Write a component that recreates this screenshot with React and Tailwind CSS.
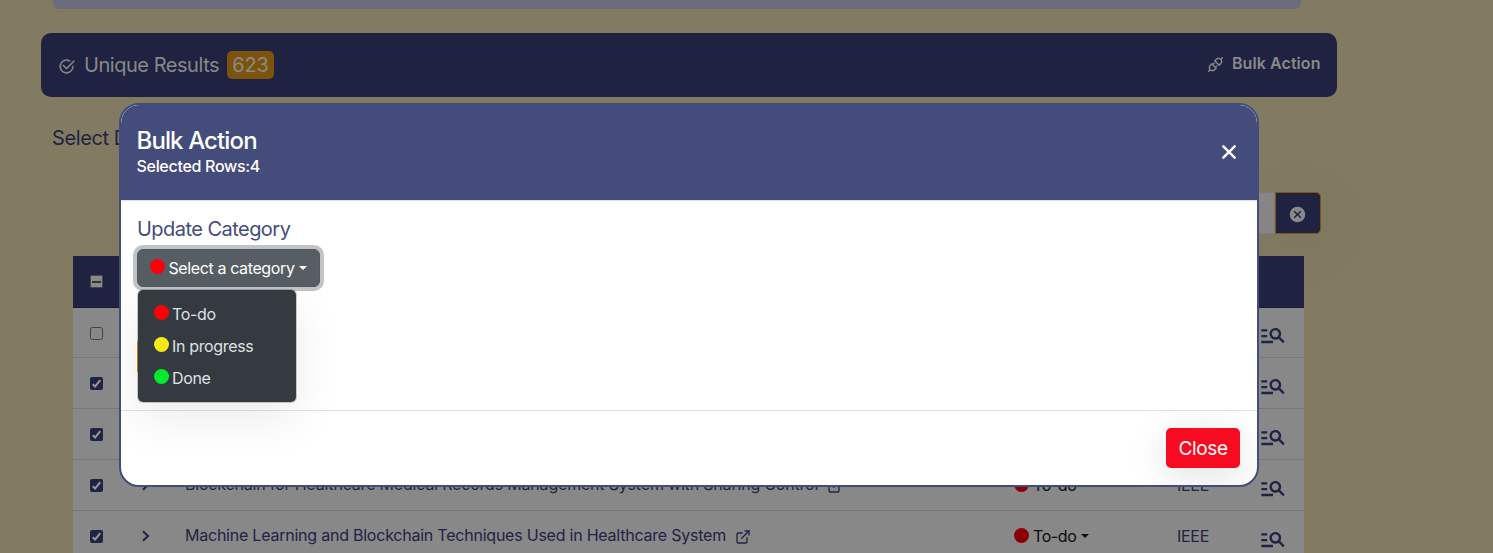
import React from "react";
import { BsCheck2Circle } from "react-icons/bs";
import { AiOutlineApi } from "react-icons/ai";
import { MdManageSearch } from "react-icons/md";
import { FiExternalLink } from "react-icons/fi";
import { IoMdCloseCircle } from "react-icons/io";

function Dot({ className }) {
  return <span className={`block size-[15px] shrink-0 rounded-full ${className}`} />;
}

function Caret({ className }) {
  return <span className={`block border-x-4 border-t-4 border-x-transparent ${className}`} />;
}

function Checkbox({ state }) {
  if (state === "checked")
    return (
      <span className="flex size-[13px] items-center justify-center rounded-[2px] bg-[#1f2344]">
        <svg viewBox="0 0 13 13" className="size-[13px]" fill="none" stroke="#979797" strokeWidth="2">
          <path d="M2.7 7.2 5.1 9.5 10.3 3.2" />
        </svg>
      </span>
    );
  if (state === "mixed")
    return (
      <span className="flex size-[13px] items-center justify-center rounded-[1px] border border-[#464646] bg-[#898989]">
        <span className="block h-[2px] w-[9px] bg-[#333]" />
      </span>
    );
  return <span className="block size-[13px] rounded-[2.5px] border border-[#414141]" />;
}

const rows = [
  { h: "h-[50px]", state: "empty" },
  { h: "h-[51px]", state: "checked" },
  { h: "h-[51px]", state: "checked" },
  {
    h: "h-[51px]",
    state: "checked",
    title: "Blockchain for Healthcare Medical Records Management System with Sharing Control",
    width: "w-[633px]",
    track: "tracking-[-0.19px]",
  },
  {
    h: "h-[51px]",
    state: "checked",
    title: "Machine Learning and Blockchain Techniques Used in Healthcare System",
    width: "w-[541px]",
    track: "tracking-[-0.23px]",
  },
];

function Row({ row }) {
  return (
    <div className={`flex shrink-0 items-center border-b border-[#777] bg-[#888] text-base text-[#1f2344] ${row.h}`}>
      <div className="flex w-[64px] shrink-0 pl-[17px] pt-px">
        <Checkbox state={row.state} />
      </div>
      <div className="w-[48px] shrink-0 pl-[5px]">
        {row.title && (
          <svg viewBox="0 0 8 12" className="h-3 w-2" fill="none" stroke="currentColor" strokeWidth="2">
            <path d="M1 1.2 6 6 1 10.8" />
          </svg>
        )}
      </div>
      <div className="flex w-[829px] shrink-0 items-center gap-[9px] whitespace-nowrap">
        {row.title && (
          <>
            <span className={`mb-[2px] ${row.width} ${row.track}`}>{row.title}</span>
            <FiExternalLink className="mt-[2px] size-4" />
          </>
        )}
      </div>
      <div className="flex w-[163px] shrink-0 items-center text-[#0c0c0c]">
        {row.title && (
          <>
            <Dot className="mb-[2px] bg-[#8b0008]" />
            <span className="ml-1 mr-px tracking-[-0.4px]">To-do</span>
            <Caret className="ml-1 border-t-[#0c0c0c]" />
          </>
        )}
      </div>
      <div className="w-[82px] shrink-0 tracking-[-0.3px]">{row.title && "IEEE"}</div>
      <MdManageSearch className="mt-[5px] size-7" />
    </div>
  );
}

function Page() {
  return (
    <div className="flex h-full w-full flex-col">
      <div className="ml-[53px] h-[9px] w-[1248px] shrink-0 rounded-b-md bg-[#6a6d7b]" />
      <div className="ml-[41px] mt-6 flex h-16 w-[1296px] shrink-0 items-center justify-between rounded-[10px] bg-[#1f2240] px-[17px] text-[#898989]">
        <div className="flex items-center">
          <BsCheck2Circle className="mt-[3px] size-[17px]" strokeWidth={0.5} />
          <span className="ml-[9px] w-[135px] whitespace-nowrap text-[20px] tracking-[-0.46px]">Unique Results</span>
          <span className="ml-2 flex h-7 w-[47px] items-center justify-center rounded-[5px] bg-[#7b530d] text-[20px] tracking-[-0.2px]">
            623
          </span>
        </div>
        <div className="flex items-center pb-[3px]">
          <AiOutlineApi className="mt-[2px] size-[19px]" strokeWidth={12} />
          <span className="mb-[2px] ml-[7px] w-[88px] whitespace-nowrap text-base font-semibold tracking-[0.07px]">
            Bulk Action
          </span>
        </div>
      </div>
      <div className="ml-[52px] mt-[26px] h-[30px] w-[70px] shrink-0 whitespace-nowrap text-[20px] leading-[30px] tracking-[-0.4px] text-[#1f2344]">
        Select D
      </div>
      <div className="mr-[172px] mt-[39px] flex h-[42px] shrink-0 justify-end">
        <div className="w-[200px] border border-[#7b7f86] bg-[#888]" />
        <div className="flex w-[46px] items-center justify-center rounded-r-[5px] border border-[#80560c] bg-[#1f2240] pr-[2px] text-[#898989] shadow-[0_12px_48px_rgba(105,70,65,0.18)]">
          <IoMdCloseCircle className="mt-[3px] size-[19px]" />
        </div>
      </div>
      <div className="ml-[73px] mt-[22px] flex w-[1231px] shrink-0 flex-col">
        <div className="flex h-[52px] items-center border-b border-[#191b33] bg-[#1f2240] pl-[17px]">
          <Checkbox state="mixed" />
        </div>
        {rows.map((row, i) => (
          <Row key={i} row={row} />
        ))}
      </div>
    </div>
  );
}

const categories = [
  { label: "To-do", color: "bg-[#ff0008]" },
  { label: "In progress", color: "bg-[#f5e917]" },
  { label: "Done", color: "bg-[#05ea2e]" },
];

function CategoryMenu() {
  return (
    <div className="absolute left-0 top-[40px] z-10 flex h-[114px] w-[160px] flex-col rounded-md border border-black/20 bg-[#343a40] bg-clip-padding pt-2 shadow-[0_16px_48px_rgba(0,0,0,0.08)]">
      {categories.map((c) => (
        <div key={c.label} className="flex h-8 items-center pl-4 text-base text-[#dee2e6]">
          <Dot className={`mb-[3px] ${c.color}`} />
          <span className="ml-[3px] tracking-[-0.35px]">{c.label}</span>
        </div>
      ))}
    </div>
  );
}

function Modal() {
  return (
    <div className="absolute left-[119px] top-[103px] flex h-[384px] w-[1140px] flex-col overflow-hidden rounded-[20px] border-2 border-[#424d7c] bg-white">
      <div className="flex h-[95px] shrink-0 justify-between rounded-t-[18px] bg-[#434c7a] text-white">
        <div className="flex flex-col pl-[15.5px] pt-[20px]">
          <h2 className="text-[24px] font-medium leading-[31px] tracking-[-0.88px]">Bulk Action</h2>
          <p className="-mt-[2px] text-base font-medium leading-6 tracking-[-0.3px]">Selected Rows:4</p>
        </div>
        <svg viewBox="0 0 14 14" className="mr-[21px] mt-[40px] size-[14px]" fill="none" stroke="#fff" strokeWidth="2.4" strokeLinecap="round">
          <path d="M1.3 1.3 12.7 12.7M12.7 1.3 1.3 12.7" />
        </svg>
      </div>
      <div className="relative z-10 flex h-[211px] shrink-0 flex-col border-b border-t border-[#dee2e6] bg-white pl-4 pt-[13px]">
        <h3 className="h-[30px] text-[20px] leading-[30px] tracking-[-0.54px] text-[#434c7a]">Update Category</h3>
        <div className="relative mt-[5px] w-[183px]">
          <button className="flex h-[38px] w-[183px] items-center rounded-md border border-[#51585e] bg-[#565e64] pl-3 text-base text-white shadow-[0_0_0_4px_#c1c4c7]">
            <Dot className="mb-[3px] bg-[#ff0008]" />
            <span className="ml-[3px] mr-px w-[127px] whitespace-nowrap tracking-[-0.38px]">Select a category</span>
            <Caret className="ml-[3px] border-t-white" />
          </button>
          <CategoryMenu />
        </div>
        <div className="mt-[51px] h-[37px] w-[100px] rounded-[5px] border border-[#f0a21a] bg-[#434c7a]" />
      </div>
      <div className="flex flex-1 justify-end pr-[17px] pt-[17px]">
        <button className="flex h-10 w-[74px] items-center justify-center rounded-[5px] bg-[#f80b20] pt-[2px] text-[19px] tracking-[-0.35px] text-white shadow-[0_8px_40px_rgba(0,0,0,0.13)]">
          Close
        </button>
      </div>
    </div>
  );
}

export default function App() {
  return (
    <div className="relative h-[553px] w-[1493px] overflow-hidden bg-[#827b62] font-['Inter','Liberation_Sans',sans-serif]">
      <Page />
      <Modal />
    </div>
  );
}
